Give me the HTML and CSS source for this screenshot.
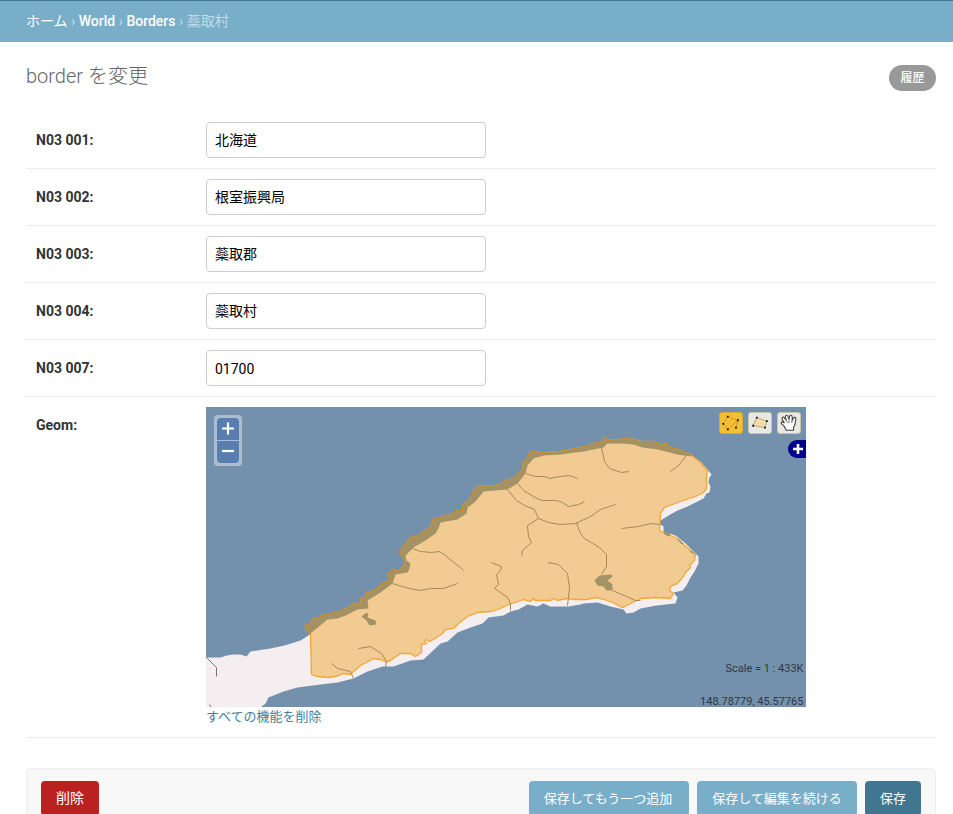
FILE: index.html
```html
<!DOCTYPE html>
<html lang="ja">
<head>
<meta charset="utf-8">
<title>border を変更</title>
<link rel="stylesheet" href="styles.css">
</head>
<body>
<nav class="breadcrumbs"><a href="#">ホーム</a> › <a href="#">World</a> › <a href="#">Borders</a> › 蘂取村</nav>
<main class="content">
  <header class="heading">
    <h1>border を変更</h1>
    <a class="history" href="#">履歴</a>
  </header>
  <form>
    <div class="row"><label for="n1">N03 001:</label><input id="n1" type="text" value="北海道"></div>
    <div class="row"><label for="n2">N03 002:</label><input id="n2" type="text" value="根室振興局"></div>
    <div class="row"><label for="n3">N03 003:</label><input id="n3" type="text" value="蘂取郡"></div>
    <div class="row"><label for="n4">N03 004:</label><input id="n4" type="text" value="蘂取村"></div>
    <div class="row"><label for="n7">N03 007:</label><input id="n7" class="latin" type="text" value="01700"></div>
    <div class="row geom">
      <label>Geom:</label>
      <div>
        <div class="map">
          <svg class="chart" viewBox="205.5 406.5 600 300">
            <path class="land" d="M205 657L220 657L226 655L233 654L240 654L246 656L250 651L270 648L284 645L300 640L311 633L400 600L660 520L668 515L677 510L687 506L703 498L706 493L709 492L710 486L708 482L709 477L711 474L707 469L700 461L690 455L640 480L650 530L660 524L663 526L663 531L675 535L684 542L692 550L698 556L698 563L694 571L690 577L686 585L682 590L673 592L677 597L675 603L656 605L640 608L633 612L626 613L623 609L610 606L597 602L583 603L580 604L568 606L550 606L543 603L537 606L527 604L518 609L510 611L503 615L488 617L482 623L470 627L457 632L447 641L440 643L423 659L410 660L393 666L382 666L367 671L353 678L337 682L320 684L297 687L283 691L268 697L265 703L260 707H205Z"/>
            <path class="area" d="M310 633L306 630L305 625L309 624L313 618L317 619L323 614L328 614L333 612L338 612L343 609L349 607L354 602L357 604L361 603L360 598L365 596L366 591L369 592L373 590L379 586L383 582L391 580L387 575L392 569L397 571L401 568L405 563L403 557L399 553L403 546L410 537L417 536L423 531L430 527L434 517L439 518L443 515L448 515L452 513L457 510L462 511L463 503L467 502L470 498L473 491L479 485L487 486L495 485L500 484L505 480L513 478L518 473L523 469L522 462L527 458L529 453L533 450L538 452L547 452L560 451L570 449L580 447L586 446L593 443L603 441L604 437L606 440L618 439L628 438L640 441L653 441L663 445L666 442L668 446L680 450L690 454L700 462L707 470L706 475L706 488L703 492L695 496L680 501L672 504L664 507L660 513L659 530L665 533L675 537L683 544L695 554L694 560L689 565L690 567L685 572L683 576L677 583L670 586L669 590L673 593L670 598L655 597L640 598L630 603L622 607L612 602L604 599L595 597L586 599L573 599L566 598L557 600L553 598L550 600L540 600L535 600L533 598L530 601L523 599L515 602L508 604L500 608L490 611L477 612L467 616L458 623L453 628L445 629L442 633L433 639L429 641L425 639L424 641L426 643L421 644L421 652L415 656L410 653L400 653L394 657L388 661L385 661L380 659L373 658L366 662L360 665L352 672L350 674L343 673L335 676L327 677L317 676L311 674Z"/>
            <path class="sea-area" d="M310 633L306 630L305 625L309 624L313 618L317 619L323 614L328 614L333 612L338 612L343 609L349 607L354 602L357 604L361 603L360 598L365 596L366 591L369 592L373 590L379 586L383 582L391 580L387 575L392 569L397 571L401 568L405 563L403 557L399 553L403 546L410 537L417 536L423 531L430 527L434 517L439 518L443 515L448 515L452 513L457 510L462 511L463 503L467 502L470 498L473 491L479 485L487 486L495 485L500 484L505 480L513 478L518 473L523 469L522 462L527 458L529 453L533 450L538 452L547 452L560 451L570 449L580 447L586 446L593 443L603 441L604 437L606 440L618 439L628 438L640 441L653 441L663 445L666 442L668 446L680 450L690 454L691 456L677 454L657 449L642 447L633 444L620 443L607 443L603 447L583 451L560 454L543 455L533 458L527 465L525 473L517 483L507 489L483 491L475 501L467 507L466 513L457 519L440 522L438 528L435 533L425 540L413 547L405 555L406 560L410 563L409 568L407 572L395 574L392 583L380 592L367 600L368 608L357 609L345 615L337 618L327 619Z"/>
            <path class="lake" d="M361 616L366 612L368 614L367 617L375 620L376 624L369 625L366 620ZM594 580L599 575L611 574L612 576L607 580L612 584L612 590L606 590L603 586L597 585ZM663 531L670 533L669 536L664 534ZM677 537L684 544L680 543ZM689 549L695 554L690 552Z"/>
            <path class="coast" d="M310 633L306 630L305 625L309 624L313 618L317 619L323 614L328 614L333 612L338 612L343 609L349 607L354 602L357 604L361 603L360 598L365 596L366 591L369 592L373 590L379 586L383 582L391 580L387 575L392 569L397 571L401 568L405 563L403 557L399 553L403 546L410 537L417 536L423 531L430 527L434 517L439 518L443 515L448 515L452 513L457 510L462 511L463 503L467 502L470 498L473 491L479 485L487 486L495 485L500 484L505 480L513 478L518 473L523 469L522 462L527 458L529 453L533 450L538 452L547 452L560 451L570 449L580 447L586 446L593 443L603 441L604 437L606 440L618 439L628 438L640 441L653 441L663 445L666 442L668 446L680 450L690 454"/>
            <path class="river" d="M412 548L420 551L431 552L439 551L445 555L452 561L460 567L463 570M392 583L405 587L419 590L431 588L443 588L457 583M491 562L501 566L500 570L496 574L498 584L494 588L500 592L507 597L510 603V610M525 473L535 476L544 476L549 478L560 476L569 475L577 478M517 483L523 490L533 496L541 500L556 500L562 502L568 506L578 504L584 501M507 489L516 500L524 505L534 509L538 518L548 522L560 524L575 523L590 516L600 509L615 504M538 518L527 525L528 536L531 542L522 550L521 555M601 447L604 461L609 468L621 472L628 471M686 455L678 465L670 471M621 528L638 526L651 523L659 524M576 522L580 533L584 538L599 547L606 554L606 566L601 574M612 590L626 596L635 600L640 600M547 562L558 564L567 573L569 588L567 605M358 648L370 646L381 653L386 661L385 666M331 663L337 668L350 671L353 678"/>
            <path class="stream" d="M206 657L216 667V676M209 704L211 707"/>
          </svg>
          <div class="zoom-control">
            <button type="button" aria-label="+"><svg viewBox="0 0 22 22"><path d="M5 10.5H17M11 4.5V16.5"/></svg></button>
            <button type="button" aria-label="−"><svg viewBox="0 0 22 22"><path d="M5 10H17"/></svg></button>
          </div>
          <div class="tools">
            <svg class="tool active" viewBox="0 0 24 22"><path class="link" d="M3.5 12L8.5 4L19.5 8L17.5 16M8.5 18L3.5 12M8.5 18L19.5 8"/><path class="node" d="M2.5 11h2v2h-2zM7.5 3h2v2h-2zM18.5 7h2v2h-2zM16.5 15h2v2h-2zM7.5 17h2v2h-2z"/></svg>
            <svg class="tool" viewBox="0 0 24 22"><path class="shape" d="M8.5 5L19.5 9L17.5 16L4.5 14Z"/><path class="node" d="M7.5 4h2v2h-2zM18.5 8h2v2h-2zM16.5 15h2v2h-2zM3.5 13h2v2h-2z"/></svg>
            <svg class="tool" viewBox="0 0 24 22"><path class="hand" d="M9 19L7 15L3.5 11.5C3 9.500 5 9 7 11L4.500 7C3.500 4.500 6 3.500 7 5.500L9 8L8 4.500C8 2 10.500 2 11 4L12 7L12.500 4C13 1.800 15.500 2.200 15.500 4.500V8L17 5.500C18.500 4 20 5.200 19.500 7L18.500 13L17 16V19Z"/><path class="finger" d="M9 8l1.500 3M12 7v4M15.500 8l-.5 3"/></svg>
          </div>
          <svg class="layers" viewBox="0 0 18 18"><path d="M9 0H18V18H9A9 9 0 0 1 9 0Z" fill="#00008b"/><path d="M5 9H15M10 4V14" stroke="#fff" stroke-width="2.6"/></svg>
          <div class="scale">Scale = 1 : 433K</div>
          <div class="position">148.78779, 45.57765</div>
        </div>
        <a class="clear" href="#">すべての機能を削除</a>
      </div>
    </div>
    <div class="submit-row">
      <a class="delete" href="#">削除</a>
      <button class="another" type="button">保存してもう一つ追加</button>
      <button type="button">保存して編集を続ける</button>
      <button class="save" type="button">保存</button>
    </div>
  </form>
</main>
</body>
</html>
```
FILE: styles.css
```css
* { box-sizing: border-box; }
html { overflow: hidden; }
body { margin: 0; background: #fff; color: #333; font: 14px/20px Roboto, "Noto Sans CJK JP", sans-serif; }
a { text-decoration: none; }
button { font-family: inherit; }
.breadcrumbs { height: 42px; padding: 0 26px; border-top: 1px solid #417690; background: #79aec8; color: #c4dce8; line-height: 40px; white-space: nowrap; }
.breadcrumbs a { color: #fff; font-weight: 500; }
.breadcrumbs a:first-child { font-weight: 400; }
.content { padding: 0 17px 0 26px; }
.heading { display: flex; justify-content: space-between; height: 70px; padding-top: 23px; }
h1 { margin: 0; color: #666; font-size: 20px; font-weight: 300; line-height: 22px; }
.history { width: 47px; height: 26px; border-radius: 13px; background: #999; color: #fff; font-size: 12px; font-weight: 500; line-height: 27px; text-align: center; }
.row { display: flex; height: 57px; padding: 10px; border-bottom: 1px solid #eee; }
.row label { width: 170px; padding-top: 8px; font-weight: 700; }
.row input { width: 280px; height: 36px; padding: 0 8px 2px; border: 1px solid #ccc; border-radius: 4px; color: #000; font: 14px "Noto Sans CJK JP", sans-serif; }
.row input.latin { padding: 2px 8px 0; font-family: Roboto, sans-serif; }
.geom { height: 341px; }
.map { position: relative; width: 600px; height: 300px; overflow: hidden; background: #7391ad; }
.chart { display: block; width: 600px; height: 300px; }
.land { fill: #f5eef0; }
.area { fill: #f1cb91; stroke: #f5a633; stroke-width: 1.3; }
.sea-area, .lake { fill: #a39264; }
.coast { fill: none; stroke: #c58c34; stroke-width: 1.2; }
.river { fill: none; stroke: #a58959; stroke-width: 1; }
.stream { fill: none; stroke: #77777a; }
.zoom-control { position: absolute; top: 8px; left: 8px; display: grid; gap: 1px; width: 28px; height: 51px; padding: 3px; border-radius: 4px; background: #adbdd1; }
.zoom-control button { width: 22px; height: 22px; padding: 0; border: 0; border-radius: 4px 4px 0 0; background: #577eae; }
.zoom-control button + button { border-radius: 0 0 4px 4px; }
.zoom-control svg { display: block; width: 22px; height: 22px; stroke: #fff; stroke-width: 2.2; }
.tools { position: absolute; top: 5px; right: 5px; display: flex; gap: 5px; }
.tool { width: 24px; height: 22px; border: 1px solid #cbc4b2; border-radius: 3px; background: #e9e9e4; }
.tool.active { border-color: #d6aa38; background: #f3c02f; }
.link { fill: none; stroke: #e48735; }
.node { fill: #111; }
.shape { fill: #f4dcab; stroke: #ba9c71; }
.hand { fill: #fff; stroke: #444; stroke-width: 1.2; }
.finger { fill: none; stroke: #666; }
.layers { position: absolute; top: 33px; right: 0; width: 18px; height: 18px; }
.scale, .position { position: absolute; right: 2.500px; color: #30383f; font-size: 11px; line-height: 14px; }
.scale { bottom: 31px; }
.position { bottom: -2px; }
.clear { display: block; color: #447e9b; font-size: 13px; line-height: 20px; }
.submit-row { display: flex; gap: 8px; height: 62px; margin-top: 30px; padding: 12px 14px; border: 1px solid #eee; border-radius: 4px; background: #f8f8f8; }
.submit-row button, .delete { height: 35px; padding: 0; border: 0; border-radius: 4px; background: #79aec8; color: #fff; font-size: 13px; line-height: 35px; text-align: center; }
.submit-row button { width: 160px; }
.submit-row .another { padding-right: 2px; }
.submit-row .save { width: 56px; background: #417690; }
.submit-row .delete { width: 58px; margin-right: auto; background: #ba2121; font-size: 14px; }
```
